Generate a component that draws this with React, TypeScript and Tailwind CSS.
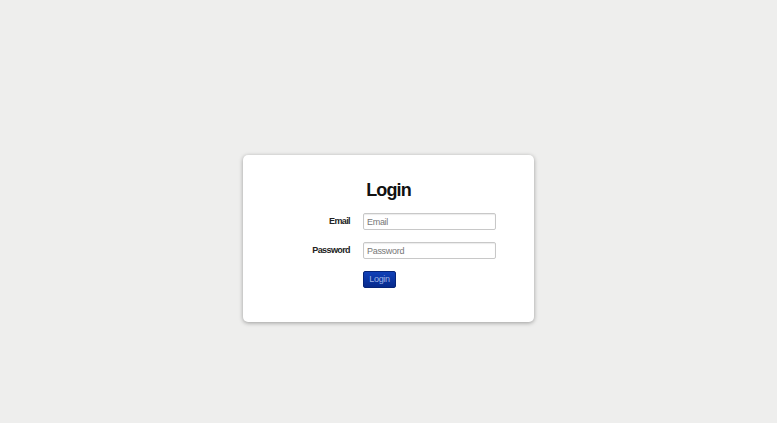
export default function App() {
  return (
    <div className="min-h-screen bg-[#eeeeed] pt-[155px] flex justify-center" style={{ fontFamily: '"Liberation Sans", Arial, sans-serif' }}>
      <div className="w-[291px] h-[167px] bg-white rounded-[5px] shadow-[0_1px_4px_rgba(0,0,0,0.35)] pt-[23px]">
        <h1 className="text-center text-[18px] leading-[24px] font-bold tracking-[-0.9px] text-[#111] mb-[11px]">Login</h1>
        <form className="flex flex-col gap-[12px]">
          <div className="flex items-center">
            <label className="w-[120px] pr-[13px] text-right text-[9px] font-bold tracking-[-0.6px] text-[#222]">Email</label>
            <input
              type="text"
              placeholder="Email"
              className="w-[133px] h-[17px] px-[3px] border border-[#c8c8c8] rounded-[2px] shadow-[inset_0_1px_1px_rgba(0,0,0,0.08)] text-[9px] tracking-[-0.3px] placeholder:text-[#777] outline-none"
            />
          </div>
          <div className="flex items-center">
            <label className="w-[120px] pr-[13px] text-right text-[9px] font-bold tracking-[-0.6px] text-[#222]">Password</label>
            <input
              type="password"
              placeholder="Password"
              className="w-[133px] h-[17px] px-[3px] border border-[#c8c8c8] rounded-[2px] shadow-[inset_0_1px_1px_rgba(0,0,0,0.08)] text-[9px] tracking-[-0.3px] placeholder:text-[#777] outline-none"
            />
          </div>
          <div className="flex">
            <div className="w-[120px]" />
            <button
              type="button"
              className="w-[33px] h-[17px] rounded-[2px] bg-gradient-to-b from-[#1040b8] to-[#072a8c] text-[#9fb4e6] text-[9px] tracking-[-0.3px] border border-[#062478]"
            >
              Login
            </button>
          </div>
        </form>
      </div>
    </div>
  );
}
